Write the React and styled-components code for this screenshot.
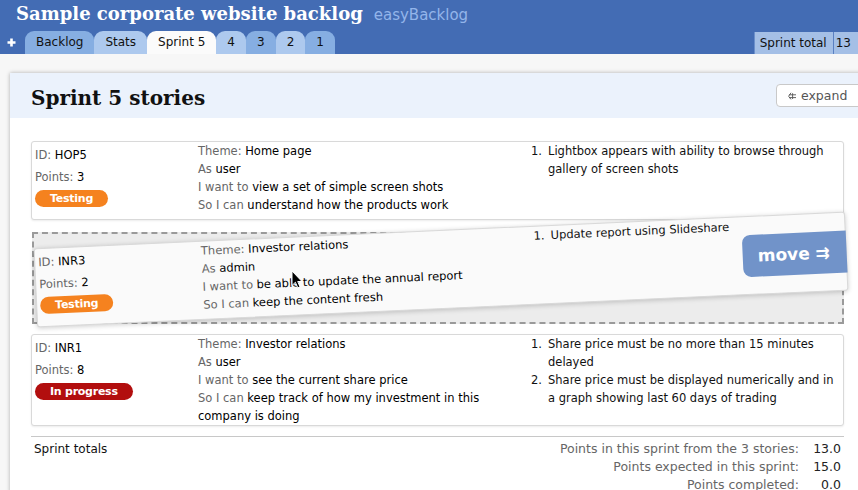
import styled, { createGlobalStyle } from "styled-components";

const GlobalStyle = createGlobalStyle`
  html, body {
    margin: 0;
    padding: 0;
    background: #f7f7f7;
  }
`;

const Page = styled.div`
  width: 858px;
  height: 490px;
  overflow: hidden;
  background: #f7f7f7;
  font-family: "DejaVu Sans", Verdana, sans-serif;
  color: #111;
`;

const Header = styled.div`
  height: 54px;
  background: #436cb4;
  display: flex;
  flex-direction: column;
`;

const TitleRow = styled.div`
  height: 31px;
  padding-left: 16px;
  display: flex;
  align-items: baseline;
  gap: 11px;
`;

const SiteTitle = styled.h1`
  margin: 0;
  font-family: "DejaVu Serif", "Liberation Serif", serif;
  font-weight: bold;
  font-size: 18px;
  line-height: 28px;
  color: #fff;
`;

const Brand = styled.span`
  font-size: 15px;
  color: #93b5ea;
`;

const TabRow = styled.div`
  height: 23px;
  display: flex;
  align-items: flex-end;
  padding-left: 7px;
`;

const AddIcon = styled.svg`
  width: 9px;
  height: 9px;
  margin: 0 9px 7px 0;
`;

const tabBg = {
  dark: "#86aee2",
  light: "#adc9ee",
  active: "#fbfbfb",
};

const Tab = styled.div`
  height: 23px;
  line-height: 23px;
  padding: 0 11px;
  font-size: 12px;
  color: #111;
  background: ${(p) => tabBg[p.$variant]};
  border-radius: 9px 9px 0 0;
`;

const SprintTotal = styled.div`
  margin-left: auto;
  margin-right: -23px;
  height: 22px;
  display: flex;
  background: #a4bfe6;
  font-size: 12px;
  line-height: 22px;
  border-left: 1px solid #6b8fcb;
`;

const TotalCell = styled.div`
  padding: 0 ${(p) => (p.$last ? "30px" : "6px")} 0 ${(p) => (p.$last ? "2px" : "5px")};
  border-left: ${(p) => (p.$last ? "1px solid #5a80c2" : "none")};
`;

const Panel = styled.div`
  margin: 19px 0 0 10px;
  width: 880px;
  height: 420px;
  background: #fff;
  box-shadow: 0 0 4px rgba(0, 0, 0, 0.3);
`;

const PanelHeader = styled.div`
  height: 45px;
  background: #ebf2fc;
  display: flex;
  justify-content: space-between;
  align-items: flex-start;
  padding-left: 21px;
`;

const PanelTitle = styled.h2`
  margin: 0;
  padding-top: 5px;
  font-family: "DejaVu Serif", "Liberation Serif", serif;
  font-weight: bold;
  font-size: 20px;
  line-height: 40px;
  color: #111;
`;

const ExpandButton = styled.div`
  margin: 11px 24px 0 0;
  width: 90px;
  height: 23px;
  box-sizing: border-box;
  border: 1px solid #c9c9c9;
  border-radius: 4px;
  background: #fff;
  display: flex;
  align-items: center;
  gap: 5px;
  padding-left: 11px;
  font-size: 12.5px;
  color: #555;
`;

const PanelBody = styled.div`
  padding: 23px 46px 0 21px;
`;

const Card = styled.div`
  display: grid;
  grid-template-columns: 166px 333px 1fr;
  background: #fff;
  border: 1px solid #d9d9d9;
  border-radius: 3px;
  box-shadow: 0 1px 2px rgba(0, 0, 0, 0.08);
  font-size: 11.5px;
  line-height: 18px;
`;

const Placeholder = styled.div`
  position: relative;
  height: 92px;
  margin: 12px 0 10px 1px;
  box-sizing: border-box;
  border: 2px dashed #9a9a9a;
  background: #ececec;
`;

const DraggedCard = styled(Card)`
  position: absolute;
  left: 1px;
  top: -4px;
  width: 812px;
  box-sizing: border-box;
  background: #fafafa;
  transform: rotate(-2.6deg);
  box-shadow: 0 1px 5px rgba(0, 0, 0, 0.2);
`;

const MoveHandle = styled.div`
  position: absolute;
  right: -1px;
  top: 50%;
  transform: translateY(-50%);
  width: 104px;
  height: 42px;
  box-sizing: border-box;
  padding-left: 15px;
  border-radius: 8px 0 0 8px;
  background: #7193c9;
  color: #fff;
  font-weight: bold;
  font-size: 17px;
  display: flex;
  align-items: center;
`;

const Cursor = styled.svg`
  position: absolute;
  left: 257px;
  top: 36px;
  width: 12px;
  height: 19px;
  z-index: 2;
`;

const MetaColumn = styled.div`
  display: flex;
  flex-direction: column;
  align-items: flex-start;
  gap: 4px;
  padding: 4px 0 12px 3px;
`;

const StoryColumn = styled.div`
  padding-right: 8px;
`;

const Label = styled.span`
  color: #666;
`;

const Value = styled.span`
  color: #000;
`;

const badgeBg = {
  testing: "#f5821f",
  progress: "#b20e0e",
};

const Badge = styled.span`
  height: 17px;
  line-height: 17px;
  padding: 0 15px;
  border-radius: 9px;
  background: ${(p) => badgeBg[p.$status]};
  color: #fff;
  font-weight: bold;
  font-size: 11px;
  letter-spacing: -0.25px;
`;

const Criteria = styled.ol`
  margin: 0;
  padding: 0 5px 0 0;
  list-style: none;
`;

const Criterion = styled.li`
  display: grid;
  grid-template-columns: 17px 1fr;
`;

const Totals = styled.div`
  margin-top: 10px;
  border-top: 1px solid #c8c8c8;
  padding: 3px 3px 0 3px;
  display: flex;
  justify-content: space-between;
  line-height: 18px;
`;

const TotalsLabel = styled.div`
  font-size: 12px;
  color: #111;
`;

const TotalsGrid = styled.div`
  display: grid;
  grid-template-columns: auto 36px;
  column-gap: 6px;
  text-align: right;
  font-size: 12.5px;
  color: #666;
`;

const TotalsValue = styled.span`
  color: #222;
`;

const stories = [
  {
    id: "HOP5",
    points: 3,
    status: "testing",
    statusText: "Testing",
    theme: "Home page",
    as: "user",
    want: "view a set of simple screen shots",
    so: "understand how the products work",
    criteria: [
      "Lightbox appears with ability to browse through gallery of screen shots",
    ],
  },
  {
    id: "INR3",
    points: 2,
    status: "testing",
    statusText: "Testing",
    theme: "Investor relations",
    as: "admin",
    want: "be able to update the annual report",
    so: "keep the content fresh",
    criteria: ["Update report using Slideshare"],
  },
  {
    id: "INR1",
    points: 8,
    status: "progress",
    statusText: "In progress",
    theme: "Investor relations",
    as: "user",
    want: "see the current share price",
    so: "keep track of how my investment in this company is doing",
    criteria: [
      "Share price must be no more than 15 minutes delayed",
      "Share price must be displayed numerically and in a graph showing last 60 days of trading",
    ],
  },
];

const StoryContent = ({ story }) => (
  <>
    <MetaColumn>
      <div>
        <Label>ID: </Label>
        <Value>{story.id}</Value>
      </div>
      <div>
        <Label>Points: </Label>
        <Value>{story.points}</Value>
      </div>
      <Badge $status={story.status}>{story.statusText}</Badge>
    </MetaColumn>
    <StoryColumn>
      <div>
        <Label>Theme: </Label>
        <Value>{story.theme}</Value>
      </div>
      <div>
        <Label>As </Label>
        <Value>{story.as}</Value>
      </div>
      <div>
        <Label>I want to </Label>
        <Value>{story.want}</Value>
      </div>
      <div>
        <Label>So I can </Label>
        <Value>{story.so}</Value>
      </div>
    </StoryColumn>
    <Criteria>
      {story.criteria.map((c, i) => (
        <Criterion key={i}>
          <span>{i + 1}.</span>
          <span>{c}</span>
        </Criterion>
      ))}
    </Criteria>
  </>
);

const tabs = [
  { name: "Backlog", variant: "dark" },
  { name: "Stats", variant: "light" },
  { name: "Sprint 5", variant: "active" },
  { name: "4", variant: "light" },
  { name: "3", variant: "dark" },
  { name: "2", variant: "light" },
  { name: "1", variant: "dark" },
];

export default function App() {
  return (
    <Page>
      <GlobalStyle />
      <Header>
        <TitleRow>
          <SiteTitle>Sample corporate website backlog</SiteTitle>
          <Brand>easyBacklog</Brand>
        </TitleRow>
        <TabRow>
          <AddIcon viewBox="0 0 9 9">
            <path d="M4.5 0.5V8.5M0.5 4.5H8.5" stroke="#fff" strokeWidth="2.6" />
          </AddIcon>
          {tabs.map((t) => (
            <Tab key={t.name} $variant={t.variant}>
              {t.name}
            </Tab>
          ))}
          <SprintTotal>
            <TotalCell>Sprint total</TotalCell>
            <TotalCell $last>13</TotalCell>
          </SprintTotal>
        </TabRow>
      </Header>
      <Panel>
        <PanelHeader>
          <PanelTitle>Sprint 5 stories</PanelTitle>
          <ExpandButton>
            <svg width="8" height="8" viewBox="0 0 8 8">
              <path
                d="M1 2.8H8M1 5.6H8M3 0.8L0.6 4.2L3 7.4M4.6 1.2V7"
                stroke="#555"
                strokeWidth="0.9"
                fill="none"
              />
            </svg>
            expand
          </ExpandButton>
        </PanelHeader>
        <PanelBody>
          <Card>
            <StoryContent story={stories[0]} />
          </Card>
          <Placeholder>
            <DraggedCard>
              <StoryContent story={stories[1]} />
              <MoveHandle>move ⇉</MoveHandle>
            </DraggedCard>
            <Cursor viewBox="0 0 12 19">
              <path
                d="M1 1L1 15.5L4.4 12.3L6.8 17.8L9 16.8L6.7 11.5L11 11.5Z"
                fill="#000"
                stroke="#fff"
                strokeWidth="1"
                strokeLinejoin="round"
              />
            </Cursor>
          </Placeholder>
          <Card>
            <StoryContent story={stories[2]} />
          </Card>
          <Totals>
            <TotalsLabel>Sprint totals</TotalsLabel>
            <TotalsGrid>
              <span>Points in this sprint from the 3 stories:</span>
              <TotalsValue>13.0</TotalsValue>
              <span>Points expected in this sprint:</span>
              <TotalsValue>15.0</TotalsValue>
              <span>Points completed:</span>
              <TotalsValue>0.0</TotalsValue>
            </TotalsGrid>
          </Totals>
        </PanelBody>
      </Panel>
    </Page>
  );
}
